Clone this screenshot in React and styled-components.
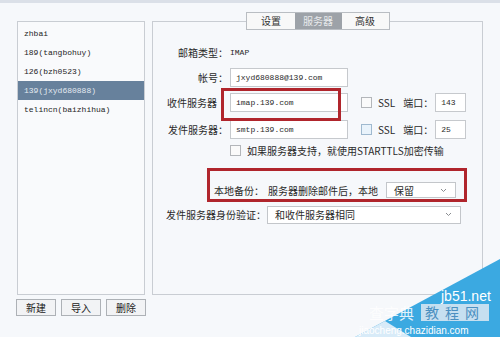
import React from 'react';
import styled, { createGlobalStyle } from 'styled-components';

const GlobalStyle = createGlobalStyle`
  html, body {
    margin: 0;
    padding: 0;
    background: #f6f8fb;
  }
  body {
    width: 500px;
    height: 337px;
    overflow: hidden;
    font-family: "Noto Sans CJK SC", "Liberation Sans", sans-serif;
    font-size: 10px;
    color: #2a2a2a;
  }
`;

const Page = styled.div`
  position: relative;
  width: 500px;
  height: 337px;
  box-sizing: border-box;
  border-top: 3px solid #dbe0e8;
  display: flex;
  padding: 18px 0 0 16px;
`;

const LeftCol = styled.div`
  width: 130px;
  display: flex;
  flex-direction: column;
`;

const AccountList = styled.div`
  margin-left: 1px;
  width: 128px;
  height: 274px;
  box-sizing: border-box;
  border: 1px solid #c9cdd3;
  background: #f9fafc;
  padding-top: 2px;
`;

const AccountItem = styled.div`
  height: 19px;
  line-height: 19px;
  padding-left: 6px;
  font-family: "Liberation Mono", "Noto Sans CJK SC", monospace;
  font-size: 8px;
  background: ${(p) => (p.active ? '#67819c' : 'transparent')};
  color: ${(p) => (p.active ? '#e4eaf1' : '#1e1e1e')};
`;

const ButtonRow = styled.div`
  display: flex;
  gap: 5px;
  margin-top: 4px;
`;

const Button = styled.div`
  width: 40px;
  height: 17px;
  box-sizing: border-box;
  border: 1px solid #adb1b6;
  background: #f2f3f5;
  text-align: center;
  line-height: 15px;
  font-size: 10px;
  color: #222;
`;

const Panel = styled.div`
  margin-left: 6px;
  width: 331px;
  height: 274px;
  box-sizing: border-box;
  border: 1px solid #c9cdd3;
  display: flex;
  flex-direction: column;
`;

const TabBar = styled.div`
  display: flex;
  margin: -10px auto 0;
  padding-left: 1px;
  border: 1px solid #b9bdc2;
  background: #f8f8f8;
`;

const Tab = styled.div`
  width: 47px;
  height: 16px;
  line-height: 16px;
  text-align: center;
  font-size: 10px;
  background: ${(p) => (p.active ? '#9da2a8' : '#f8f8f8')};
  color: ${(p) => (p.active ? '#e8eaec' : '#333')};
`;

const Row = styled.div`
  display: flex;
  align-items: center;
  height: ${(p) => p.h || 19}px;
  margin-top: ${(p) => p.mt || 0}px;
  padding-left: ${(p) => p.pl || 0}px;
`;

const Label = styled.div`
  width: 75px;
  text-align: right;
  padding-right: ${(p) => p.pr || 0}px;
  box-sizing: border-box;
  white-space: nowrap;
`;

const Value = styled.span`
  margin-left: 2px;
  font-family: "Liberation Mono", monospace;
  font-size: 8px;
`;

const Input = styled.div`
  width: ${(p) => p.w}px;
  height: 19px;
  box-sizing: border-box;
  margin-left: ${(p) => p.ml || 0}px;
  border: 1px solid #c6c9cd;
  background: #fff;
  padding-left: 5px;
  line-height: 17px;
  font-family: "Liberation Mono", "Noto Sans CJK SC", monospace;
  font-size: 8px;
`;

const Check = styled.div`
  width: 11px;
  height: 11px;
  box-sizing: border-box;
  margin-left: ${(p) => p.ml || 0}px;
  border: 1px solid ${(p) => (p.tint ? '#9fb9cf' : '#b3b6ba')};
  background: ${(p) => (p.tint ? '#e9f3fb' : '#fafafa')};
`;

const Text = styled.span`
  margin-left: ${(p) => p.ml || 0}px;
  white-space: nowrap;
`;

const Select = styled.div`
  display: flex;
  align-items: center;
  justify-content: space-between;
  width: ${(p) => p.w}px;
  height: ${(p) => p.h || 18}px;
  box-sizing: border-box;
  margin-left: ${(p) => p.ml || 0}px;
  border: 1px solid #c3c6ca;
  background: #fff;
  padding: 0 8px 0 7px;
`;

const Chevron = () => (
  <svg width="7" height="5" viewBox="0 0 7 5">
    <path d="M1 1 L3.5 3.5 L6 1" fill="none" stroke="#8a8d91" strokeWidth="1" />
  </svg>
);

const Mark = styled.div`
  position: absolute;
  left: ${(p) => p.x}px;
  top: ${(p) => p.y}px;
  width: ${(p) => p.w}px;
  height: ${(p) => p.h}px;
  box-sizing: border-box;
  border: 3px solid #b0252c;
`;

const Watermark = styled.svg`
  position: absolute;
  right: 0;
  bottom: 0;
`;

const accounts = ['zhbai', '189(tangbohuy)', '126(bzh0523)', '139(jxyd680888)', 'telincn(baizhihua)'];

const App = () => (
  <>
    <GlobalStyle />
    <Page>
      <LeftCol>
        <AccountList>
          {accounts.map((a) => (
            <AccountItem key={a} active={a === '139(jxyd680888)'}>{a}</AccountItem>
          ))}
        </AccountList>
        <ButtonRow>
          <Button>新建</Button>
          <Button>导入</Button>
          <Button>删除</Button>
        </ButtonRow>
      </LeftCol>

      <Panel>
        <TabBar>
          <Tab>设置</Tab>
          <Tab active>服务器</Tab>
          <Tab>高级</Tab>
        </TabBar>
        <Row mt={13}>
          <Label>邮箱类型：</Label>
          <Value>IMAP</Value>
        </Row>
        <Row mt={6}>
          <Label>帐号：</Label>
          <Input w={118} ml={2}>jxyd680888@139.com</Input>
        </Row>
        <Row mt={6}>
          <Label pr={11}>收件服务器</Label>
          <Input w={118} ml={2}>imap.139.com</Input>
          <Check ml={13} />
          <Text ml={6}>SSL</Text>
          <Text ml={8}>端口：</Text>
          <Input w={31} ml={2}>143</Input>
        </Row>
        <Row mt={8}>
          <Label>发件服务器：</Label>
          <Input w={118} ml={2}>smtp.139.com</Input>
          <Check ml={13} tint />
          <Text ml={6}>SSL</Text>
          <Text ml={8}>端口：</Text>
          <Input w={31} ml={2}>25</Input>
        </Row>
        <Row mt={3} h={16} pl={77}>
          <Check />
          <Text ml={6}>如果服务器支持，就使用STARTTLS加密传输</Text>
        </Row>
        <Row mt={24} h={16} pl={61}>
          <Text>本地备份：</Text>
          <Text ml={4}>服务器删除邮件后，本地</Text>
          <Select w={70} h={16} ml={8}>
            <span>保留</span>
            <Chevron />
          </Select>
        </Row>
        <Row mt={7} pl={13}>
          <Text>发件服务器身份验证：</Text>
          <Select w={194} h={18} ml={1}>
            <span>和收件服务器相同</span>
            <Chevron />
          </Select>
        </Row>
      </Panel>

      <Mark x={221} y={85} w={120} h={33} />
      <Mark x={207} y={165} w={260} h={34} />

      <Watermark width="145" height="80" viewBox="0 0 145 80">
        <polygon points="0,80 145,2 145,80" fill="#3ba9e1" />
        <polygon points="0,80 30,64 56,80" fill="#f4f7fb" opacity="0.85" />
        <text x="86" y="44" fill="#ffffff" fontSize="14" fontFamily="Liberation Sans, sans-serif">jb51.net</text>
        <rect x="66" y="47" width="68" height="17" fill="#dfe9f2" opacity="0.85" />
        <text x="70" y="61" fill="#4b8fc0" fontSize="14" letterSpacing="6" fontFamily="Noto Sans CJK SC, sans-serif">教程网</text>
        <text x="14" y="62" fill="#ffffff" fontSize="15" opacity="0.85" fontFamily="Noto Sans CJK SC, sans-serif">查字典</text>
        <text x="4" y="77" fill="#ffffff" fontSize="10" fontFamily="Liberation Sans, sans-serif">jiaocheng.chazidian.com</text>
      </Watermark>
    </Page>
  </>
);

export default App;
